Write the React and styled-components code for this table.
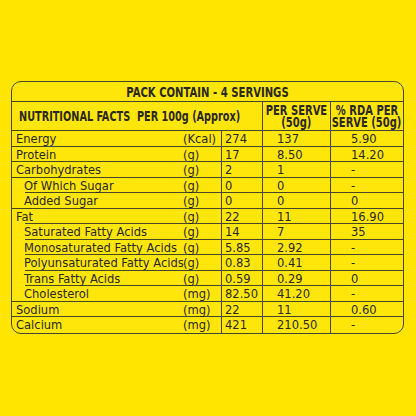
import React from 'react';
import styled, { createGlobalStyle } from 'styled-components';

const Global = createGlobalStyle`
  html, body {
    margin: 0;
    padding: 0;
    background: #ffe500;
  }
  body {
    font-family: "DejaVu Sans Condensed", "Liberation Sans", sans-serif;
    color: #2a281c;
  }
`;

const rows = [
  { name: 'Energy', unit: '(Kcal)', per100: '274', serve: '137', rda: '5.90' },
  { name: 'Protein', unit: '(g)', per100: '17', serve: '8.50', rda: '14.20' },
  { name: 'Carbohydrates', unit: '(g)', per100: '2', serve: '1', rda: '-' },
  { name: 'Of Which Sugar', unit: '(g)', per100: '0', serve: '0', rda: '-', sub: true, cut: true },
  { name: 'Added Sugar', unit: '(g)', per100: '0', serve: '0', rda: '0', sub: true },
  { name: 'Fat', unit: '(g)', per100: '22', serve: '11', rda: '16.90', cut: true },
  { name: 'Saturated Fatty Acids', unit: '(g)', per100: '14', serve: '7', rda: '35', sub: true, cut: true },
  { name: 'Monosaturated Fatty Acids', unit: '(g)', per100: '5.85', serve: '2.92', rda: '-', sub: true, cut: true },
  { name: 'Polyunsaturated Fatty Acids', unit: '(g)', per100: '0.83', serve: '0.41', rda: '-', sub: true, cut: true },
  { name: 'Trans Fatty Acids', unit: '(g)', per100: '0.59', serve: '0.29', rda: '0', sub: true, cut: true },
  { name: 'Cholesterol', unit: '(mg)', per100: '82.50', serve: '41.20', rda: '-', sub: true },
  { name: 'Sodium', unit: '(mg)', per100: '22', serve: '11', rda: '0.60' },
  { name: 'Calcium', unit: '(mg)', per100: '421', serve: '210.50', rda: '-', last: true },
];

function App() {
  return (
    <Page>
      <Global />
      <Card>
        <Title>
          <Squeeze scale={0.8}>PACK CONTAIN - 4 SERVINGS</Squeeze>
        </Title>
        <HeadRow>
          <HeadMain>
            <Squeeze scale={0.8} origin="left">NUTRITIONAL FACTS&nbsp; PER 100g (Approx)</Squeeze>
          </HeadMain>
          <HeadCell>
            <Squeeze scale={0.82}>PER SERVE</Squeeze>
            <Squeeze scale={0.82}>(50g)</Squeeze>
          </HeadCell>
          <HeadCell>
            <Squeeze scale={0.82}>% RDA PER</Squeeze>
            <Squeeze scale={0.82}>SERVE (50g)</Squeeze>
          </HeadCell>
        </HeadRow>
        {rows.map(r => (
          <Row key={r.name} cut={r.cut ? 13 : 0} last={r.last}>
            <Name sub={r.sub}>{r.name}</Name>
            <Unit>{r.unit}</Unit>
            <Value>{r.per100}</Value>
            <Serve>{r.serve}</Serve>
            <Rda>{r.rda}</Rda>
          </Row>
        ))}
      </Card>
    </Page>
  );
}

export default App;

const line = '#4a4526';

const Page = styled.div`
  width: 416px;
  height: 416px;
  padding: 81px 0 0 11px;
  box-sizing: border-box;
  background: #ffe500;
`;

const Card = styled.div`
  width: 393px;
  border: 1.5px solid ${line};
  border-radius: 10px;
  overflow: hidden;
  box-sizing: border-box;
  background: #ffe60a;
`;

const Squeeze = styled.span`
  display: inline-block;
  white-space: nowrap;
  transform: scaleX(${p => p.scale});
  transform-origin: ${p => p.origin || 'center'};
`;

const Title = styled.div`
  height: 20px;
  display: flex;
  align-items: center;
  justify-content: center;
  border-bottom: 1px solid ${line};
  box-sizing: border-box;
  font-weight: bold;
  font-size: 14px;
`;

const cols = '171px 38px 41px 68px minmax(0, 1fr)';

const HeadRow = styled.div`
  display: grid;
  grid-template-columns: ${cols};
  height: 29px;
  border-bottom: 1px solid ${line};
  box-sizing: border-box;
  font-weight: bold;
  font-size: 13.5px;
`;

const HeadMain = styled.div`
  grid-column: 1 / 4;
  display: flex;
  align-items: center;
  padding-left: 7px;
  padding-bottom: 1px;
  min-width: 0;
`;

const HeadCell = styled.div`
  border-left: 1px solid ${line};
  display: flex;
  flex-direction: column;
  align-items: center;
  justify-content: center;
  line-height: 12px;
  padding-bottom: 1px;
  min-width: 0;
`;

const Row = styled.div`
  display: grid;
  grid-template-columns: ${cols};
  height: 15.5px;
  font-size: 12.8px;
  line-height: 15.5px;
  background: ${p => p.last ? 'none' : `linear-gradient(${line}, ${line}) no-repeat right bottom / calc(100% - ${p.cut}px) 1px`};
`;

const Cell = styled.div`
  white-space: nowrap;
  min-width: 0;
`;

const Name = styled(Cell)`
  padding-left: ${p => p.sub ? 12 : 4}px;
`;

const Unit = styled(Cell)`
  padding-left: 0;
`;

const Value = styled(Cell)`
  border-left: 1px solid ${line};
  padding-left: 3px;
`;

const Serve = styled(Cell)`
  border-left: 1px solid ${line};
  padding-left: 14px;
`;

const Rda = styled(Cell)`
  border-left: 1px solid ${line};
  padding-left: 20px;
`;
